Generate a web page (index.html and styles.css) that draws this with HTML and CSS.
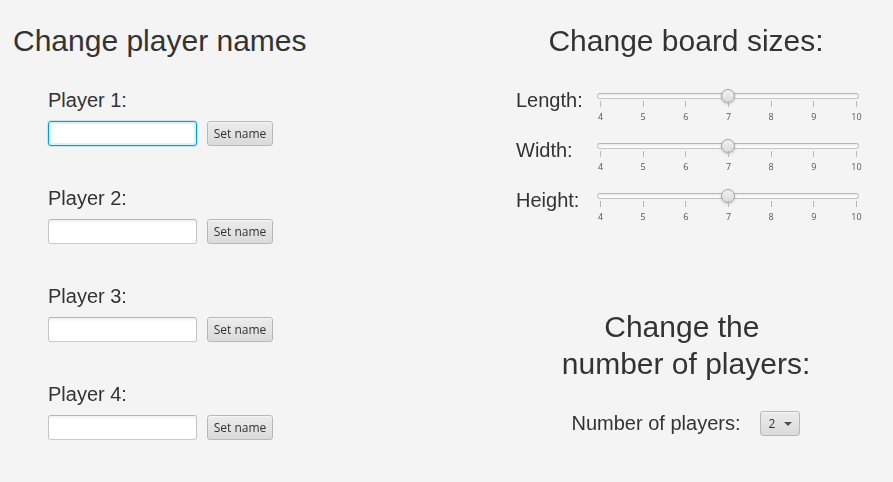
FILE: index.html
```html
<!DOCTYPE html>
<html lang="en">
<head>
<meta charset="utf-8">
<title>Game settings</title>
<link rel="stylesheet" href="styles.css">
</head>
<body>
<main class="settings">
  <section class="names">
    <h1 class="title">Change player names</h1>
    <div class="players">
      <form class="player">
        <label class="label" for="player1">Player 1:</label>
        <div class="entry"><input class="field" id="player1" type="text" autocomplete="off" autofocus><button class="button" type="button">Set name</button></div>
      </form>
      <form class="player">
        <label class="label" for="player2">Player 2:</label>
        <div class="entry"><input class="field" id="player2" type="text" autocomplete="off"><button class="button" type="button">Set name</button></div>
      </form>
      <form class="player">
        <label class="label" for="player3">Player 3:</label>
        <div class="entry"><input class="field" id="player3" type="text" autocomplete="off"><button class="button" type="button">Set name</button></div>
      </form>
      <form class="player">
        <label class="label" for="player4">Player 4:</label>
        <div class="entry"><input class="field" id="player4" type="text" autocomplete="off"><button class="button" type="button">Set name</button></div>
      </form>
    </div>
  </section>

  <div class="side">
    <section class="board">
      <h2 class="title centered">Change board sizes:</h2>
      <div class="sizes">
        <div class="size">
          <label class="label" for="length">Length:</label>
          <div class="slider">
            <input class="range" id="length" type="range" min="4" max="10" value="7">
            <div class="scale"><span>4</span><span>5</span><span>6</span><span>7</span><span>8</span><span>9</span><span>10</span></div>
          </div>
        </div>
        <div class="size">
          <label class="label" for="width">Width:</label>
          <div class="slider">
            <input class="range" id="width" type="range" min="4" max="10" value="7">
            <div class="scale"><span>4</span><span>5</span><span>6</span><span>7</span><span>8</span><span>9</span><span>10</span></div>
          </div>
        </div>
        <div class="size">
          <label class="label" for="height">Height:</label>
          <div class="slider">
            <input class="range" id="height" type="range" min="4" max="10" value="7">
            <div class="scale"><span>4</span><span>5</span><span>6</span><span>7</span><span>8</span><span>9</span><span>10</span></div>
          </div>
        </div>
      </div>
    </section>

    <section class="count">
      <h2 class="title centered">Change the&nbsp;<br>number of players:</h2>
      <div class="count-row">
        <label class="label" for="count">Number of players:</label>
        <div class="choice">
          <select class="select" id="count"><option selected>2</option><option>3</option><option>4</option></select>
        </div>
      </div>
    </section>
  </div>
</main>
</body>
</html>
```
FILE: styles.css
```css
* {
  box-sizing: border-box;
}

body {
  margin: 0;
  background: #f4f4f4;
  color: #333;
  font-family: "Liberation Sans", Arial, sans-serif;
}

.settings {
  display: flex;
  justify-content: space-between;
  padding: 22px 31px 22px 13px;
}

.title {
  margin: 0 0 29px;
  font-size: 30px;
  font-weight: 400;
  line-height: 37px;
}

.centered {
  text-align: center;
}

.label {
  font-size: 20px;
  line-height: 24px;
}

/* Player names */
.players {
  display: grid;
  gap: 40px;
  padding-left: 35px;
}

.player {
  display: grid;
  gap: 9px;
}

.entry {
  display: flex;
  gap: 10px;
}

.field,
.button,
.select {
  height: 25px;
  margin: 0;
  border: 1px solid #b8b8b8;
  border-radius: 3px;
  color: #333;
  font-family: "Open Sans", "Noto Sans", sans-serif;
  font-size: 12px;
}

.field {
  width: 149px;
  padding: 0 7px;
  border-color: #b5b5b5 #c4c4c4 #cacaca;
  background: linear-gradient(#f2f2f2, #fff 4px);
}

.field:focus {
  outline: none;
  border-color: #039ed3;
  background: #fff;
  box-shadow: 0 0 0 1px #c5e7f2, inset 0 0 0 2px #daf1f8;
  caret-color: transparent;
}

.button {
  width: 66px;
  padding: 0;
  background: linear-gradient(#ececec, #dadada);
  box-shadow: inset 0 1px #f6f6f6;
}

/* Board sizes */
.side {
  display: grid;
  align-content: start;
  gap: 70px;
  width: 352px;
}

.sizes {
  padding-left: 6px;
}

.size {
  display: grid;
  grid-template-columns: 81px 262px;
  height: 50px;
}

.slider {
  padding-top: 3px;
}

.range {
  display: block;
  width: 100%;
  height: 10px;
  margin: 0;
  appearance: none;
  background: none;
}

.range::-webkit-slider-runnable-track {
  height: 6px;
  border: 1px solid #c4c4c4;
  border-top-color: #b5b5b5;
  border-radius: 3px;
  background: linear-gradient(#ededed, #fff);
}

.range::-webkit-slider-thumb {
  width: 14px;
  height: 14px;
  margin-top: -5px;
  appearance: none;
  border: 1px solid #a3a3a3;
  border-radius: 50%;
  background: linear-gradient(#f0f0f0, #dcdcdc);
  box-shadow: 0 1px 3px #0003;
}

.scale {
  display: flex;
  justify-content: space-between;
  padding: 0 2px 0 3px;
  color: #555;
  font-family: "Open Sans", "Noto Sans", sans-serif;
  font-size: 9px;
  line-height: 12px;
}

.scale span {
  display: flex;
  flex-direction: column;
  align-items: center;
  gap: 4px;
  width: 1px;
}

.scale span::before {
  width: 1px;
  height: 6px;
  background: #b8b8b8;
  content: "";
}

/* Number of players */
.count-row {
  display: flex;
  justify-content: center;
  gap: 20px;
}

.choice {
  position: relative;
}

.choice::after {
  position: absolute;
  top: 11px;
  right: 8px;
  border: 4px solid transparent;
  border-top-color: #4d4d4d;
  border-bottom: 0;
  content: "";
  pointer-events: none;
}

.select {
  display: block;
  width: 40px;
  padding: 0 7px;
  appearance: none;
  background: linear-gradient(#ececec, #dadada);
  box-shadow: inset 0 1px #f6f6f6;
}
```
